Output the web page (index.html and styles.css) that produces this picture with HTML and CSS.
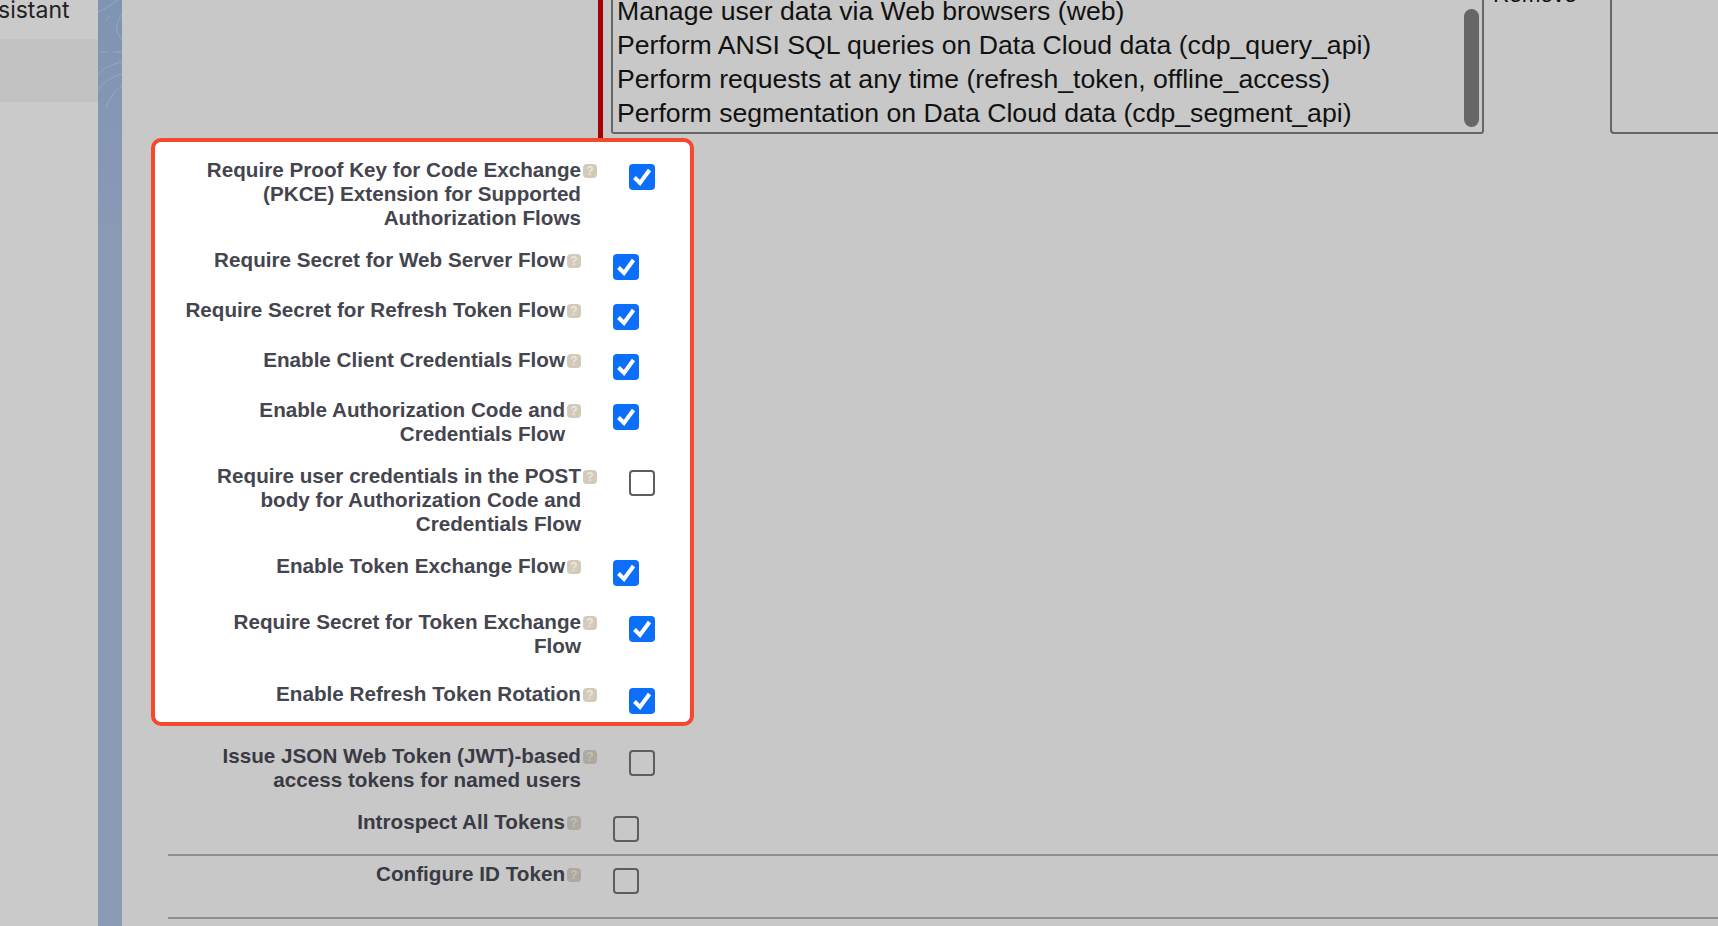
FILE: index.html
```html
<!DOCTYPE html>
<html lang="en">
<head>
    <meta charset="UTF-8">
    <meta name="viewport" content="width=device-width, initial-scale=1.0">
    <title>Connected App OAuth Settings</title>
    <link rel="stylesheet" href="styles.css">
</head>
<body>
    <aside class="sidebar">
        <div class="side-item">Assistant</div>
        <div class="side-band"></div>
    </aside>
    <div class="strip">
        <svg width="24" height="926" viewBox="0 0 24 926" fill="none" stroke="#98a8bf" stroke-width="1">
            <path d="M0 12C8 8 14 4 20 0"/>
            <path d="M24 14C18 22 16 30 24 40"/>
            <path d="M8 20L12 16"/>
            <path d="M3 52H10M15 52H24"/>
            <path d="M0 74C6 68 14 64 24 62"/>
            <path d="M0 90C6 82 14 76 24 74"/>
            <path d="M8 108C12 96 18 90 24 86"/>
        </svg>
    </div>
    <main class="main">
        <section class="scopes">
            <div class="required-bar"></div>
            <div class="scope-list">
                <div class="scope-option">Manage user data via Web browsers (web)</div>
                <div class="scope-option">Perform ANSI SQL queries on Data Cloud data (cdp_query_api)</div>
                <div class="scope-option">Perform requests at any time (refresh_token, offline_access)</div>
                <div class="scope-option">Perform segmentation on Data Cloud data (cdp_segment_api)</div>
                <div class="scroll-thumb"></div>
            </div>
            <div class="remove-col">Remove</div>
            <div class="selected-list"></div>
        </section>

        <section class="spotlight">
            <div class="row row-first">
                <label class="row-label">Require Proof Key for Code Exchange<br>(PKCE) Extension for Supported<br>Authorization Flows</label>
                <span class="help">?</span>
                <span class="check checked"><svg viewBox="0 0 26 26"><path d="M5.5 13.5L11 19L20.5 6"/></svg></span>
            </div>
            <div class="row row-inset">
                <label class="row-label">Require Secret for Web Server Flow</label>
                <span class="help">?</span>
                <span class="check checked"><svg viewBox="0 0 26 26"><path d="M5.5 13.5L11 19L20.5 6"/></svg></span>
            </div>
            <div class="row row-inset">
                <label class="row-label">Require Secret for Refresh Token Flow</label>
                <span class="help">?</span>
                <span class="check checked"><svg viewBox="0 0 26 26"><path d="M5.5 13.5L11 19L20.5 6"/></svg></span>
            </div>
            <div class="row row-inset">
                <label class="row-label">Enable Client Credentials Flow</label>
                <span class="help">?</span>
                <span class="check checked"><svg viewBox="0 0 26 26"><path d="M5.5 13.5L11 19L20.5 6"/></svg></span>
            </div>
            <div class="row row-inset">
                <label class="row-label">Enable Authorization Code and<br>Credentials Flow</label>
                <span class="help">?</span>
                <span class="check checked"><svg viewBox="0 0 26 26"><path d="M5.5 13.5L11 19L20.5 6"/></svg></span>
            </div>
            <div class="row">
                <label class="row-label">Require user credentials in the POST<br>body for Authorization Code and<br>Credentials Flow</label>
                <span class="help">?</span>
                <span class="check"></span>
            </div>
            <div class="row row-inset row-loose">
                <label class="row-label">Enable Token Exchange Flow</label>
                <span class="help">?</span>
                <span class="check checked"><svg viewBox="0 0 26 26"><path d="M5.5 13.5L11 19L20.5 6"/></svg></span>
            </div>
            <div class="row row-loose">
                <label class="row-label">Require Secret for Token Exchange<br>Flow</label>
                <span class="help">?</span>
                <span class="check checked"><svg viewBox="0 0 26 26"><path d="M5.5 13.5L11 19L20.5 6"/></svg></span>
            </div>
            <div class="row row-last">
                <label class="row-label">Enable Refresh Token Rotation</label>
                <span class="help">?</span>
                <span class="check checked"><svg viewBox="0 0 26 26"><path d="M5.5 13.5L11 19L20.5 6"/></svg></span>
            </div>
        </section>

        <section class="rest">
            <div class="row">
                <label class="row-label">Issue JSON Web Token (JWT)-based<br>access tokens for named users</label>
                <span class="help">?</span>
                <span class="check"></span>
            </div>
            <div class="row row-inset">
                <label class="row-label">Introspect All Tokens</label>
                <span class="help">?</span>
                <span class="check"></span>
            </div>
            <div class="divider-block">
                <div class="row row-inset">
                    <label class="row-label">Configure ID Token</label>
                    <span class="help">?</span>
                    <span class="check"></span>
                </div>
            </div>
        </section>
    </main>
</body>
</html>
```

FILE: styles.css
```css
html, body {
    margin: 0;
    padding: 0;
    height: 100%;
}
body {
    display: flex;
    overflow: hidden;
    background: #c8c8c8;
    font-family: "Liberation Sans", Arial, sans-serif;
    color: #111;
}
.sidebar {
    width: 98px;
    flex: none;
    overflow: hidden;
    background: #cacaca;
}
.side-item {
    margin: -6px 0 0 -30px;
    height: 45px;
    font-family: Inter, sans-serif;
    font-size: 23px;
    line-height: 32px;
    white-space: nowrap;
    color: #222;
}
.side-band {
    height: 63px;
    background: #c2c2c2;
}
.strip {
    width: 24px;
    flex: none;
    background: linear-gradient(#7f94b2, #8a9bb5 260px);
}
.strip svg {
    display: block;
}
.main {
    flex: 1;
    min-width: 0;
    overflow: hidden;
}
.scopes {
    display: flex;
    height: 138px;
    margin-left: 476px;
}
.required-bar {
    width: 5px;
    background: #a60000;
}
.scope-list {
    position: relative;
    box-sizing: border-box;
    width: 873px;
    height: 137px;
    margin-top: -3px;
    margin-left: 8px;
    padding: 0 0 0 4px;
    border: 2px solid #666;
    border-radius: 0 0 3px 3px;
}
.scope-option {
    height: 34px;
    font-size: 26.65px;
    line-height: 34px;
    white-space: nowrap;
}
.scope-option:first-child {
    margin-top: -5px;
}
.scroll-thumb {
    position: absolute;
    top: 10px;
    right: 3px;
    width: 15px;
    height: 118px;
    border-radius: 8px;
    background: #666;
}
.remove-col {
    width: 126px;
    margin-top: -21px;
    padding-left: 9px;
    box-sizing: border-box;
    font-size: 22.5px;
    line-height: 32px;
}
.selected-list {
    flex: 1;
    height: 137px;
    margin-top: -3px;
    box-sizing: border-box;
    border-left: 2px solid #666;
    border-bottom: 2px solid #666;
    border-radius: 0 0 0 4px;
}
.spotlight {
    box-sizing: border-box;
    width: 543px;
    height: 588px;
    margin-left: 29px;
    padding: 16px 0 0 0;
    background: #fff;
    border: 4px solid #f4492a;
    border-radius: 10px;
}
.row {
    display: flex;
    justify-content: flex-end;
    align-items: flex-start;
    margin-bottom: 18px;
    padding-right: 35px;
}
.spotlight .row {
    color: #45454f;
}
.row-inset {
    padding-right: 51px;
}
.row-loose {
    margin-bottom: 24px;
}
.row-last {
    margin-bottom: 0;
}
.row-label {
    font-size: 20.66px;
    font-weight: bold;
    line-height: 24px;
    text-align: right;
}
.help {
    width: 14px;
    height: 14px;
    margin: 6px 32px 0 2px;
    flex: none;
    border-radius: 4px;
    background: #d3cabb;
    color: #ece6db;
    font-size: 12px;
    font-weight: bold;
    line-height: 14px;
    text-align: center;
}
.check {
    box-sizing: border-box;
    width: 26px;
    height: 26px;
    margin-top: 6px;
    flex: none;
    border: 2px solid #5d5d5d;
    border-radius: 4px;
}
.check.checked {
    border: 0;
    background: #0b6ffc;
}
.check svg {
    display: block;
    width: 26px;
    height: 26px;
    fill: none;
    stroke: #fff;
    stroke-width: 4;
}
.rest {
    margin: 0 0 0 46px;
    padding-top: 18px;
    color: #3a3a44;
}
.rest .help {
    background: #aea99e;
    color: #c4bfb5;
}
.rest .row {
    width: 522px;
    box-sizing: border-box;
}
.divider-block {
    margin-top: -6px;
    height: 55px;
    padding-top: 6px;
    border-top: 2px solid #8f8f8f;
    border-bottom: 2px solid #8f8f8f;
}
```
